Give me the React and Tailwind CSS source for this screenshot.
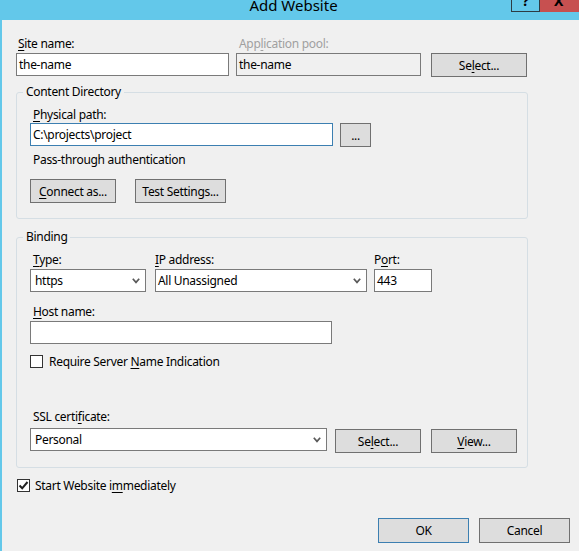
import React from "react";

const U = ({ children }) => (
  <span className="underline underline-offset-[2px] decoration-1">{children}</span>
);

function Btn({ children, className = "" }) {
  return (
    <div
      className={`flex items-center justify-center h-[24px] pt-[1px] border border-[#707070] bg-[#dddddd] text-black ${className}`}
    >
      {children}
    </div>
  );
}

const Chevron = () => (
  <svg width="8" height="6" viewBox="0 0 8 6">
    <path d="M0.8 0.8 L4 4.4 L7.2 0.8" fill="none" stroke="#5a5a5a" strokeWidth="1.7" />
  </svg>
);

function Select({ children, className = "", pad = "pl-[4px]" }) {
  return (
    <div
      className={`h-[23px] border border-[#7a7a7a] bg-white flex items-center justify-between ${pad} pr-[5px] ${className}`}
    >
      <span className="pt-[1px]">{children}</span>
      <Chevron />
    </div>
  );
}

function Check({ checked }) {
  return (
    <div className="w-[13px] h-[13px] border border-[#333333] bg-white flex items-center justify-center shrink-0">
      {checked && (
        <svg width="11" height="11" viewBox="0 0 11 11">
          <path d="M1.5 5.5 L4.2 8.3 L9.5 2" fill="none" stroke="#222222" strokeWidth="2" />
        </svg>
      )}
    </div>
  );
}

export default function App() {
  return (
    <div className="w-[579px] h-[551px] bg-[#f0f0f0] overflow-hidden font-['Segoe_UI','Noto_Sans',sans-serif] text-[12px] leading-[16px] tracking-[-0.3px] text-black">
      {/* Title bar */}
      <div className="relative h-[20px] bg-[#63c8ea] overflow-hidden flex justify-center">
        <div className="text-[15px] leading-[20px] -mt-[5px] text-black ml-[8px] tracking-normal">Add Website</div>
        <div className="absolute right-0 top-0 flex">
          <div className="w-[29px] h-[12px] border-l border-b border-r border-[#2d3b44] flex justify-center overflow-hidden">
            <span className="font-bold text-[14px] leading-[14px] -mt-[6px]">?</span>
          </div>
          <div className="w-[39px] h-[12px] bg-[#c75050] flex justify-center overflow-hidden">
            <span className="font-bold text-[14px] leading-[14px] -mt-[6px] -ml-[2px]">X</span>
          </div>
        </div>
      </div>

      {/* Body */}
      <div className="h-[531px] border-l-2 border-[#63c8ea] pl-[14px] pr-[9px] pt-[15px] flex flex-col">
        {/* Row 1 */}
        <div className="flex items-start w-[512px]">
          <div className="w-[213px]">
            <div className="h-[18px] pt-[1px] pl-[2px]">
              <U>S</U>ite name:
            </div>
            <div className="h-[23px] border border-[#7a7a7a] bg-white pl-[2px] flex items-center">the-name</div>
          </div>
          <div className="w-[185px] ml-[7px]">
            <div className="h-[18px] pt-[1px] pl-[3px] text-[#a0a0a0]">
              App<U>l</U>ication pool:
            </div>
            <div className="h-[23px] border border-[#7a7a7a] bg-[#f0f0f0] pl-[2px] flex items-center">the-name</div>
          </div>
          <Btn className="ml-[10px] mt-[18px] w-[96px]">
            Se<U>l</U>ect...
          </Btn>
        </div>

        {/* Content Directory */}
        <div className="relative mt-[15px] w-[512px] border border-[#d5dee4] rounded-[3px] pl-[13px] pt-[13px] pb-[15px]">
          <div className="absolute left-[6px] -top-[9px] px-[3px] bg-[#f0f0f0]">Content Directory</div>
          <div className="h-[17px] pt-[1px] pl-[3px]">
            <U>P</U>hysical path:
          </div>
          <div className="flex items-start">
            <div className="w-[303px] h-[23px] border border-[#3c7fb1] bg-white pl-[2px] flex items-center">
              C:\projects\project
            </div>
            <Btn className="ml-[7px] w-[31px]">...</Btn>
          </div>
          <div className="mt-[4px] pt-[1px] h-[16px] pl-[3px]">Pass-through authentication</div>
          <div className="flex mt-[12px]">
            <Btn className="w-[86px]">
              <U>C</U>onnect as...
            </Btn>
            <Btn className="ml-[19px] w-[91px]">Test Settings...</Btn>
          </div>
        </div>

        {/* Binding */}
        <div className="relative mt-[18px] w-[512px] border border-[#d5dee4] rounded-[3px] pl-[13px] pt-[13px] pb-[14px]">
          <div className="absolute left-[6px] -top-[9px] px-[3px] bg-[#f0f0f0]">Binding</div>
          <div className="flex items-start">
            <div className="w-[116px]">
              <div className="h-[18px] pt-[1px] pl-[3px]">
                <U>T</U>ype:
              </div>
              <Select>https</Select>
            </div>
            <div className="w-[212px] ml-[9px]">
              <div className="h-[18px] pt-[1px] pl-[0px]">
                <U>I</U>P address:
              </div>
              <Select pad="pl-[2px]">All Unassigned</Select>
            </div>
            <div className="w-[58px] ml-[7px]">
              <div className="h-[18px] pt-[1px]">
                P<U>o</U>rt:
              </div>
              <div className="h-[23px] border border-[#7a7a7a] bg-white pl-[2px] pt-[1px] flex items-center">443</div>
            </div>
          </div>
          <div className="mt-[11px] h-[18px] pt-[1px] pl-[3px]">
            <U>H</U>ost name:
          </div>
          <div className="w-[302px] h-[23px] border border-[#7a7a7a] bg-white" />
          <div className="mt-[9px] h-[16px] flex items-center">
            <Check />
            <span className="ml-[6px] pt-[2px]">
              Require Server <U>N</U>ame Indication
            </span>
          </div>
          <div className="mt-[39px] h-[20px] pt-[1px] pl-[3px]">
            SSL certi<U>f</U>icate:
          </div>
          <div className="flex items-start">
            <Select className="w-[297px]">Personal</Select>
            <Btn className="ml-[8px] mt-[1px] w-[86px]">
              Se<U>l</U>ect...
            </Btn>
            <Btn className="ml-[10px] mt-[1px] w-[86px]">
              <U>V</U>iew...
            </Btn>
          </div>
        </div>

        {/* Start website */}
        <div className="mt-[9px] ml-[1px] h-[16px] flex items-center">
          <Check checked />
          <span className="ml-[5px] pt-[2px]">
            Start Website i<U>m</U>mediately
          </span>
        </div>

        {/* Footer */}
        <div className="mt-[25px] flex justify-end">
          <div className="w-[91px] h-[25px] pt-[1px] border border-[#3c7fb1] bg-[#dddddd] flex items-center justify-center">OK</div>
          <div className="ml-[10px] w-[91px] h-[25px] pt-[1px] border border-[#707070] bg-[#dddddd] flex items-center justify-center">
            Cancel
          </div>
        </div>
      </div>
    </div>
  );
}
